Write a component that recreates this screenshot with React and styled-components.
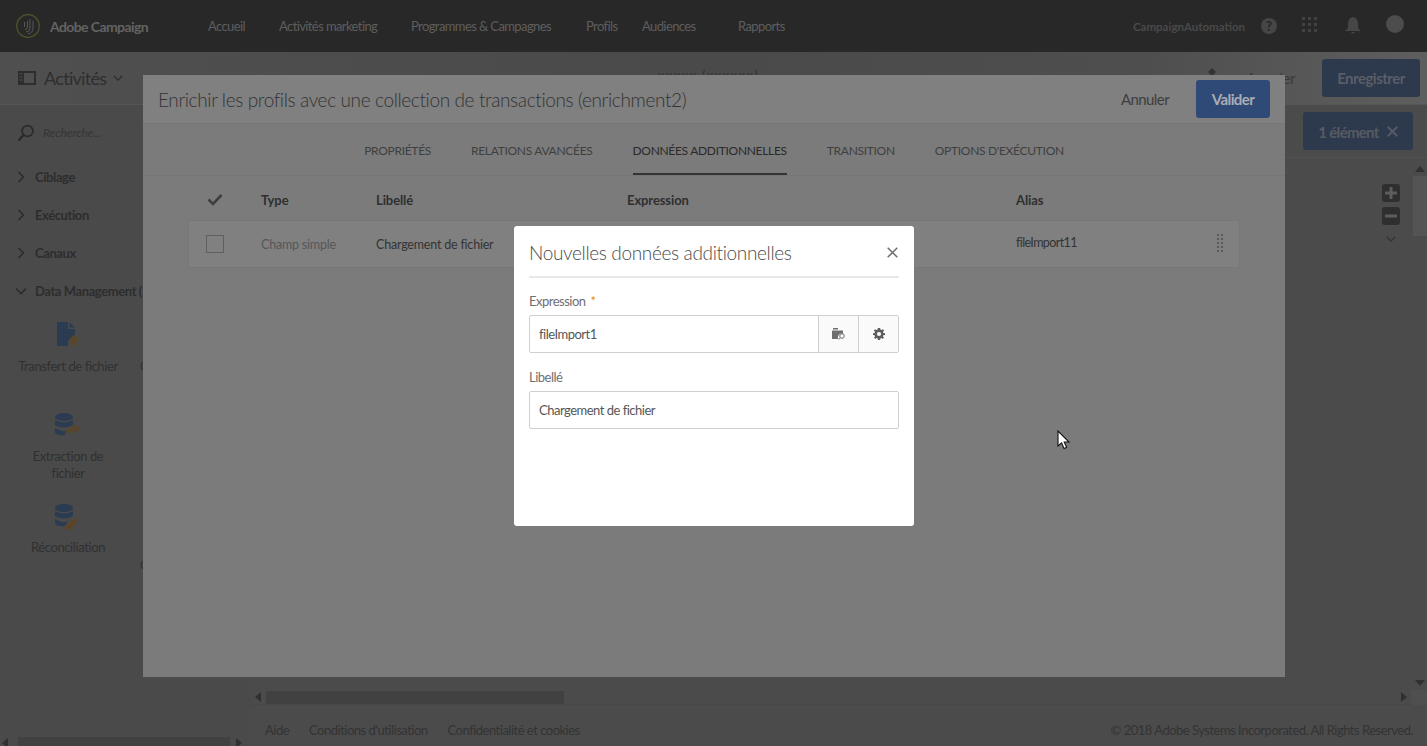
import React from "react";
import styled, { createGlobalStyle } from "styled-components";

const GlobalStyle = createGlobalStyle`
	html, body {
		margin: 0;
		padding: 0;
		height: 100%;
		overflow: hidden;
		background: #4b4b4b;
		font-family: "Lato", "Liberation Sans", sans-serif;
	}
	* {
		box-sizing: border-box;
	}
`;

const navItems = [
	["Accueil", 71],
	["Activités marketing", 132],
	["Programmes & Campagnes", 175],
	["Profils", 56],
	["Audiences", 96],
	["Rapports", 60],
];
const tabs = ["Propriétés", "Relations avancées", "Données additionnelles", "Transition", "Options d'exécution"];
const groups = [
	["Ciblage", false],
	["Exécution", false],
	["Canaux", false],
	["Data Management (", true],
];

const Chevron = ({ open, color = "#2c2c2c", size = 14 }) => (
	<svg width={size} height={size} viewBox="0 0 14 14" fill="none">
		<path d={open ? "M2 4.5 L7 9.5 L12 4.5" : "M4.5 2 L9.5 7 L4.5 12"} stroke={color} strokeWidth="1.6" />
	</svg>
);

const Logo = () => (
	<svg width="24" height="24" viewBox="0 0 24 24" fill="none">
		<circle cx="12" cy="12" r="11.3" stroke="#54542a" strokeWidth="1.2" />
		<path d="M14 5 V14 Q14 18 10 18 M11.5 7 V13 Q11.5 15.5 9 15.5 M17 7 V14 Q17 19 12 20 M8.5 8 V13" stroke="#5c5c5c" strokeWidth="0.9" />
	</svg>
);

const PanelIcon = () => (
	<svg width="18" height="14" viewBox="0 0 18 14">
		<path d="M0 0 H18 V14 H0 Z M6 2 V12 H16 V2 Z" fill="#2e2e2e" fillRule="evenodd" />
		<path d="M1.5 3 H4.5 M1.5 6 H4.5 M1.5 9 H4.5" stroke="#4f4f4f" strokeWidth="1" />
	</svg>
);

const SearchIcon = () => (
	<svg width="18" height="18" viewBox="0 0 18 18" fill="none">
		<circle cx="10.5" cy="7" r="5.4" stroke="#2a2a2a" strokeWidth="1.7" />
		<path d="M6.5 11 L1.5 16.5" stroke="#2a2a2a" strokeWidth="2.4" />
	</svg>
);

const FileIcon = () => (
	<svg width="24" height="27" viewBox="0 0 24 27">
		<path d="M1 0 H12 V7 H19 V13 L12 19 V24 H1 Z" fill="#2a3b52" />
		<path d="M13.5 0 L19 5.5 H13.5 Z" fill="#2a3b52" />
		<path d="M18 12.5 L23.5 18.5 H20.5 V24 H15.5 V18.5 H12.5 Z" fill="#5a4528" />
	</svg>
);

const DbIcon = ({ kind }) => (
	<svg width="28" height="26" viewBox="0 0 28 26">
		<ellipse cx="10" cy="4" rx="9" ry="4" fill="#2a3b52" />
		<path d="M1 7 Q10 12 19 7 V12 Q10 17 1 12 Z M1 15 Q10 20 14 17 L11 22 Q4 23 1 20 Z" fill="#2a3b52" />
		{kind === "arrow" ? (
			<path d="M11 22 Q12 14 20 14 V11 L26 16 L20 21 V18 Q15 18 11 22 Z" fill="#5a4528" />
		) : (
			<path d="M13 20 A3.5 3.5 0 1 0 18 24 L24 17 L22 14 Z" fill="#5a4528" />
		)}
	</svg>
);

const FolderSearchIcon = () => (
	<svg width="14" height="12" viewBox="0 0 14 12">
		<path d="M1 0 H6 V1.5 H1 Z M0 2.5 H11 V6 A3.5 3.5 0 0 0 6.5 11 H0 Z" fill="#6e6e6e" />
		<circle cx="10" cy="8" r="2.3" fill="none" stroke="#6e6e6e" strokeWidth="1" />
		<path d="M8.3 9.8 L6.8 11.5" stroke="#6e6e6e" strokeWidth="1" />
	</svg>
);

const GearIcon = () => (
	<svg width="12" height="12" viewBox="0 0 12 12">
		<path
			d="M4.9 0 H7.1 L7.4 1.6 L8.7 2.1 L10 1.2 L11.2 2.8 L10 3.8 L10.3 5 L12 5.2 V7 L10.3 7.2 L10 8.4 L11 9.6 L9.6 11 L8.5 10 L7.3 10.4 L7.1 12 H4.9 L4.7 10.4 L3.5 10 L2.4 11 L1 9.6 L2 8.4 L1.7 7.2 L0 7 V5.2 L1.7 5 L2 3.8 L0.8 2.8 L2 1.2 L3.3 2.1 L4.6 1.6 Z M6 3.9 A2.1 2.1 0 1 0 6 8.1 A2.1 2.1 0 1 0 6 3.9 Z"
			fill="#5d5d5d"
			fillRule="evenodd"
		/>
	</svg>
);

const CrossIcon = ({ size = 11, color = "#6e6e6e", weight = 1.4 }) => (
	<svg width={size} height={size} viewBox="0 0 11 11" fill="none">
		<path d="M0.7 0.7 L10.3 10.3 M10.3 0.7 L0.7 10.3" stroke={color} strokeWidth={weight} />
	</svg>
);

const Dots = ({ cols, rows, color, gap = 5, dot = 3 }) => (
	<svg width={cols * gap} height={rows * gap} viewBox={`0 0 ${cols * gap} ${rows * gap}`}>
		{Array.from({ length: cols * rows }, (_, i) => (
			<rect key={i} x={(i % cols) * gap} y={Math.floor(i / cols) * gap} width={dot} height={dot} fill={color} />
		))}
	</svg>
);

const Triangle = ({ dir }) => {
	const points = {
		up: "0,6 5,0 10,6",
		down: "0,0 5,6 10,0",
		left: "6,0 0,5 6,10",
		right: "0,0 6,5 0,10",
	}[dir];
	return (
		<svg width="10" height="10" viewBox="0 0 10 10">
			<polygon points={points} fill="#303030" />
		</svg>
	);
};

export default function App() {
	return (
		<Screen>
			<GlobalStyle />
			<TopBar>
				<Brand>
					<Logo />
					<BrandName>Adobe Campaign</BrandName>
				</Brand>
				<Nav>
					{navItems.map(([label, w]) => (
						<NavItem key={label} $w={w}>
							{label}
						</NavItem>
					))}
				</Nav>
				<UserArea>
					<Org>CampaignAutomation</Org>
					<HelpBadge>?</HelpBadge>
					<Dots cols={3} rows={3} color="#424242" gap={6} dot={3} />
					<svg width="16" height="18" viewBox="0 0 16 18">
						<path d="M8 0 Q13 1 13 7 V11 L16 14 H0 L3 11 V7 Q3 1 8 0 Z M6 15 H10 Q8 18 6 15 Z" fill="#464646" />
					</svg>
					<Avatar />
				</UserArea>
			</TopBar>

			<Toolbar>
				<ToolbarTitle>
					<PanelIcon />
					<span>Activités</span>
					<Chevron open size={12} color="#2e2e2e" />
				</ToolbarTitle>
				<WorkflowName>xxxxx (xxxxxx)</WorkflowName>
				<ToolbarActions>
					<UndoIcon width="14" height="14" viewBox="0 0 14 14">
						<path d="M7 0 L11 4 L7 8 L3 4 Z" fill="#333" />
					</UndoIcon>
					<UndoLabel>Annuler</UndoLabel>
					<SaveButton>Enregistrer</SaveButton>
				</ToolbarActions>
			</Toolbar>

			<Body>
				<Sidebar>
					<Search>
						<SearchIcon />
						<em>Recherche...</em>
					</Search>
					{groups.map(([label, open]) => (
						<GroupRow key={label}>
							<Chevron open={open} />
							<span>{label}</span>
						</GroupRow>
					))}
					<Palette>
						<PaletteItem>
							<FileIcon />
							<span>Transfert de fichier</span>
						</PaletteItem>
						<PaletteSide $top={36}>Chargement de fichier</PaletteSide>
						<PaletteItem>
							<DbIcon kind="arrow" />
							<span>Extraction de fichier</span>
						</PaletteItem>
						<span />
						<PaletteItem>
							<DbIcon kind="key" />
							<span>Réconciliation</span>
						</PaletteItem>
						<PaletteSide $top={53}>Chiffrement</PaletteSide>
					</Palette>
					<SideScroll>
						<Triangle dir="left" />
						<SideThumb />
						<Triangle dir="right" />
					</SideScroll>
				</Sidebar>

				<Main>
					<ActionRow>
						<SelectionButton>
							1 élément
							<CrossIcon size={11} color="#565b63" weight={2} />
						</SelectionButton>
					</ActionRow>
					<CanvasRow>
						<Canvas>
							<ZoomTools>
								<ZoomButton>
									<svg width="12" height="12" viewBox="0 0 12 12">
										<path d="M0 6 H12 M6 0 V12" stroke="#5d5d5d" strokeWidth="3" />
									</svg>
								</ZoomButton>
								<ZoomButton>
									<svg width="12" height="12" viewBox="0 0 12 12">
										<path d="M0 6 H12" stroke="#5d5d5d" strokeWidth="3" />
									</svg>
								</ZoomButton>
								<ZoomChevron>
									<Chevron open size={12} color="#333" />
								</ZoomChevron>
							</ZoomTools>
						</Canvas>
						<VScroll>
							<Triangle dir="up" />
							<VThumb />
							<Triangle dir="down" />
						</VScroll>
					</CanvasRow>
					<HScroll>
						<Triangle dir="left" />
						<HTrack>
							<HThumb />
						</HTrack>
						<Triangle dir="right" />
						<Corner />
					</HScroll>
					<Footer>
						<FooterLinks>
							<span>Aide</span>
							<span>Conditions d'utilisation</span>
							<span>Confidentialité et cookies</span>
						</FooterLinks>
						<span>© 2018 Adobe Systems Incorporated. All Rights Reserved.</span>
					</Footer>
				</Main>
			</Body>

			<EnrichDialog>
				<EnrichHeader>
					<EnrichTitle>Enrichir les profils avec une collection de transactions (enrichment2)</EnrichTitle>
					<CancelLabel>Annuler</CancelLabel>
					<ConfirmButton>Valider</ConfirmButton>
				</EnrichHeader>
				<Tabs>
					{tabs.map((t, i) => (
						<Tab key={t} $active={i === 2}>
							{t}
						</Tab>
					))}
				</Tabs>
				<TableArea>
					<HeadRow>
						<svg width="16" height="13" viewBox="0 0 16 13" fill="none">
							<path d="M1.5 6.5 L6 11 L14.5 2" stroke="#3f3f3f" strokeWidth="2.6" />
						</svg>
						<span>Type</span>
						<span>Libellé</span>
						<span>Expression</span>
						<span>Alias</span>
					</HeadRow>
					<DataRow>
						<Checkbox />
						<Muted>Champ simple</Muted>
						<span>Chargement de fichier</span>
						<span />
						<AliasCell>fileImport11</AliasCell>
						<Grip>
							<Dots cols={2} rows={5} color="#5a5a5a" gap={4} dot={2} />
						</Grip>
					</DataRow>
				</TableArea>
			</EnrichDialog>

			<ModalLayer>
				<Modal>
					<ModalHeader>
						<h2>Nouvelles données additionnelles</h2>
						<CrossIcon size={11} color="#6e6e6e" weight={1.5} />
					</ModalHeader>
					<FieldLabel>
						Expression <Required>*</Required>
					</FieldLabel>
					<InputGroup>
						<InputText>fileImport1</InputText>
						<AddonButton>
							<FolderSearchIcon />
						</AddonButton>
						<AddonButton>
							<GearIcon />
						</AddonButton>
					</InputGroup>
					<FieldLabel $second>Libellé</FieldLabel>
					<InputGroup>
						<InputText>Chargement de fichier</InputText>
					</InputGroup>
				</Modal>
			</ModalLayer>

			<Cursor width="13" height="20" viewBox="0 0 13 20">
				<path d="M1 1 V16 L4.6 12.8 L7 18.5 L9.6 17.4 L7.2 12 H12 Z" fill="#fff" stroke="#111" strokeWidth="1.1" />
			</Cursor>
		</Screen>
	);
}

const Screen = styled.div`
	position: relative;
	width: 1427px;
	height: 746px;
	overflow: hidden;
	display: flex;
	flex-direction: column;
	background: #4b4b4b;
`;

const TopBar = styled.header`
	height: 52px;
	flex: none;
	background: #282828;
	display: flex;
	align-items: center;
	padding-left: 16px;
	color: #5e5e5e;
	font-size: 13px;
	letter-spacing: -0.6px;
`;

const Brand = styled.div`
	width: 192px;
	display: flex;
	align-items: center;
	gap: 10px;
`;

const BrandName = styled.span`
	font-size: 14px;
	font-weight: 700;
	color: #636363;
`;

const Nav = styled.nav`
	display: flex;
`;

const NavItem = styled.span`
	width: ${(p) => p.$w}px;
	white-space: nowrap;
`;

const UserArea = styled.div`
	margin-left: auto;
	padding-right: 23px;
	display: flex;
	align-items: center;
	gap: 25px;
`;

const Org = styled.span`
	font-size: 11.5px;
	font-weight: 700;
	letter-spacing: 0;
	color: #4a4a4a;
	margin-right: -9px;
`;

const HelpBadge = styled.span`
	width: 16px;
	height: 16px;
	border-radius: 50%;
	background: #464646;
	color: #282828;
	font-size: 13px;
	font-weight: 900;
	letter-spacing: 0;
	display: flex;
	align-items: center;
	justify-content: center;
`;

const Avatar = styled.span`
	width: 18px;
	height: 18px;
	border-radius: 50%;
	background: #4c4c4c;
	margin-top: -4px;
`;

const Toolbar = styled.div`
	height: 53px;
	flex: none;
	display: flex;
	align-items: center;
	padding: 0 7px 0 18px;
	background: linear-gradient(90deg, #4f4f4f 0%, #4a4a4a 50%, #4e4e4e 80%, #5e5e5e 100%);
	border-bottom: 1px solid #565656;
`;

const ToolbarTitle = styled.div`
	display: flex;
	align-items: center;
	gap: 8px;
	width: 640px;
	font-size: 18px;
	letter-spacing: -0.7px;
	color: #2e2e2e;

	span {
		margin-right: -2px;
	}
`;

const WorkflowName = styled.div`
	font-size: 13px;
	letter-spacing: 1.4px;
	color: #333;
	margin-top: -7px;
`;

const ToolbarActions = styled.div`
	margin-left: auto;
	display: flex;
	align-items: center;
	gap: 27px;
`;

const UndoIcon = styled.svg`
	align-self: flex-start;
	margin: 9px 0 0 0;
`;

const UndoLabel = styled.span`
	font-size: 15px;
	letter-spacing: -0.5px;
	color: #3a3a3a;
`;

const SaveButton = styled.div`
	width: 98px;
	height: 38px;
	border-radius: 3px;
	background: #2d394d;
	color: #5a5e66;
	font-size: 15px;
	font-weight: 700;
	letter-spacing: -0.5px;
	display: flex;
	align-items: center;
	justify-content: center;
`;

const Body = styled.div`
	flex: 1;
	min-height: 0;
	display: flex;
`;

const Sidebar = styled.aside`
	width: 250px;
	flex: none;
	position: relative;
	padding-top: 18px;
	background: #4a4a4a;
`;

const Search = styled.div`
	display: flex;
	align-items: center;
	gap: 8px;
	padding-left: 17px;
	height: 19px;
	margin-bottom: 16px;
	color: #353535;
	font-size: 12px;
	letter-spacing: -0.1px;
`;

const GroupRow = styled.div`
	height: 38px;
	display: flex;
	align-items: center;
	gap: 7px;
	padding-left: 14px;
	font-size: 13px;
	font-weight: 700;
	letter-spacing: -0.4px;
	color: #2d2d2d;
	white-space: nowrap;
`;

const Palette = styled.div`
	display: grid;
	grid-template-columns: 136px 110px;
	grid-auto-rows: 91px;
	margin-top: 12px;
`;

const PaletteItem = styled.div`
	display: flex;
	flex-direction: column;
	align-items: center;
	text-align: center;
	gap: 9px;
	font-size: 13px;
	line-height: 17px;
	letter-spacing: -0.4px;
	color: #303030;

	span {
		max-width: 104px;
	}
`;

const PaletteSide = styled.div`
	padding: ${(p) => p.$top}px 0 0 4px;
	font-size: 13px;
	line-height: 17px;
	color: #303030;
	white-space: nowrap;
`;

const SideScroll = styled.div`
	position: absolute;
	left: 2px;
	right: 4px;
	bottom: -3px;
	height: 12px;
	display: flex;
	align-items: center;
	gap: 6px;
`;

const SideThumb = styled.div`
	flex: 1;
	height: 12px;
	background: #414141;
`;

const Main = styled.main`
	flex: 1;
	min-width: 0;
	display: flex;
	flex-direction: column;
`;

const ActionRow = styled.div`
	height: 53px;
	flex: none;
	display: flex;
	align-items: center;
	justify-content: flex-end;
	padding-right: 14px;
	border-bottom: 1px solid #525252;
`;

const SelectionButton = styled.div`
	width: 110px;
	height: 38px;
	padding-top: 1px;
	border-radius: 3px;
	background: #2d394d;
	color: #565b63;
	font-size: 15px;
	font-weight: 700;
	letter-spacing: -0.7px;
	display: flex;
	align-items: center;
	justify-content: center;
	gap: 8px;
`;

const CanvasRow = styled.div`
	flex: 1;
	min-height: 0;
	display: flex;
`;

const Canvas = styled.div`
	flex: 1;
	position: relative;
`;

const ZoomTools = styled.div`
	position: absolute;
	top: 26px;
	right: 13px;
	display: flex;
	flex-direction: column;
	align-items: center;
	gap: 5px;
`;

const ZoomButton = styled.div`
	width: 18px;
	height: 18px;
	border-radius: 3px;
	background: #2f2f2f;
	display: flex;
	align-items: center;
	justify-content: center;
`;

const ZoomChevron = styled.div`
	margin-top: 3px;
	display: flex;
`;

const VScroll = styled.div`
	width: 14px;
	flex: none;
	display: flex;
	flex-direction: column;
	align-items: center;
	padding-top: 8px;
`;

const VThumb = styled.div`
	width: 14px;
	height: 60px;
	background: #545454;
	margin-bottom: auto;
`;

const HScroll = styled.div`
	height: 15px;
	flex: none;
	display: flex;
	align-items: center;
	padding-left: 5px;
	margin-bottom: 2px;
	border-bottom: 1px solid #484848;
`;

const HTrack = styled.div`
	width: 1138px;
	height: 13px;
	margin-left: 1px;
`;

const HThumb = styled.div`
	width: 298px;
	height: 13px;
	background: #414141;
`;

const Corner = styled.div`
	width: 16px;
	height: 15px;
	margin-left: auto;
	background: #4f4f4f;
`;

const Footer = styled.footer`
	height: 39px;
	flex: none;
	display: flex;
	justify-content: space-between;
	align-items: center;
	padding: 6px 14px 0 15px;
	font-size: 13px;
	letter-spacing: -0.5px;
	color: #333;
`;

const FooterLinks = styled.div`
	display: flex;
	gap: 20px;
`;

const EnrichDialog = styled.section`
	position: absolute;
	left: 143px;
	top: 75px;
	width: 1142px;
	height: 602px;
	background: #7b7b7b;
`;

const EnrichHeader = styled.div`
	height: 49px;
	display: flex;
	align-items: center;
	padding: 0 15px 0 15px;
	background: #808080;
	border-bottom: 1px solid #767676;
`;

const EnrichTitle = styled.h1`
	margin: 0;
	flex: 1;
	font-size: 19px;
	font-weight: 300;
	letter-spacing: -0.37px;
	color: #333;
`;

const CancelLabel = styled.span`
	font-size: 15px;
	letter-spacing: -0.6px;
	color: #3e3e3e;
	margin-right: 27px;
`;

const ConfirmButton = styled.div`
	width: 74px;
	height: 38px;
	border-radius: 3px;
	background: #304a78;
	color: #a9adb5;
	font-size: 15px;
	font-weight: 700;
	letter-spacing: -0.6px;
	display: flex;
	align-items: center;
	justify-content: center;
`;

const Tabs = styled.div`
	height: 52px;
	display: flex;
	justify-content: center;
	gap: 40px;
	border-bottom: 1px solid #767676;
`;

const Tab = styled.div`
	display: flex;
	align-items: center;
	height: 51px;
	padding-top: 3px;
	font-size: 12px;
	letter-spacing: -0.3px;
	text-transform: uppercase;
	color: ${(p) => (p.$active ? "#2a2a2a" : "#3f3f3f")};
	border-bottom: 2px solid ${(p) => (p.$active ? "#333" : "transparent")};
`;

const TableArea = styled.div`
	padding: 0 45px;
`;

const HeadRow = styled.div`
	height: 44px;
	padding-top: 3px;
	display: grid;
	grid-template-columns: 73px 115px 251px 389px 1fr;
	align-items: center;
	font-size: 13px;
	font-weight: 700;
	letter-spacing: -0.1px;
	color: #2f2f2f;

	svg {
		margin-left: 19px;
	}
`;

const DataRow = styled.div`
	height: 48px;
	display: grid;
	grid-template-columns: 72px 115px 251px 389px 1fr 22px;
	align-items: center;
	font-size: 12.5px;
	letter-spacing: -0.2px;
	color: #333;
	background: #808080;
	border: 1px solid #777;
	border-radius: 2px;
`;

const Muted = styled.span`
	color: #565656;
`;

const AliasCell = styled.span`
	letter-spacing: -0.6px;
	margin-top: -3px;
`;

const Checkbox = styled.span`
	width: 18px;
	height: 18px;
	margin-left: 17px;
	border: 1px solid #5f5f5f;
`;

const Grip = styled.span`
	display: flex;
	align-items: center;
`;

const ModalLayer = styled.div`
	position: absolute;
	inset: 0;
	padding-top: 226px;
	display: flex;
	justify-content: center;
	align-items: flex-start;
`;

const Modal = styled.div`
	width: 400px;
	height: 300px;
	background: #fff;
	border-radius: 3px;
	padding: 0 15px;
	margin-left: 1px;
`;

const ModalHeader = styled.div`
	height: 52px;
	padding: 3px 1px 0 0;
	display: flex;
	align-items: center;
	justify-content: space-between;
	border-bottom: 2px solid #e8e8e8;

	h2 {
		margin: 0;
		font-size: 19px;
		font-weight: 300;
		letter-spacing: -0.35px;
		color: #4b4b4b;
	}
`;

const FieldLabel = styled.div`
	margin-top: ${(p) => (p.$second ? "17px" : "16px")};
	margin-bottom: 6px;
	height: 15px;
	line-height: 15px;
	font-size: 13px;
	letter-spacing: -0.5px;
	color: #707070;
`;

const Required = styled.span`
	color: #e68619;
	margin-left: 2px;
`;

const InputGroup = styled.div`
	height: 38px;
	display: flex;
	border: 1px solid #cfcfcf;
	border-radius: 2px;
`;

const InputText = styled.div`
	flex: 1;
	display: flex;
	align-items: center;
	padding-left: 9px;
	font-size: 13px;
	letter-spacing: -0.5px;
	color: #565656;
`;

const AddonButton = styled.div`
	width: 40px;
	display: flex;
	align-items: center;
	justify-content: center;
	background: #fafafa;
	border-left: 1px solid #cfcfcf;
`;

const Cursor = styled.svg`
	position: absolute;
	left: 1057px;
	top: 430px;
`;
